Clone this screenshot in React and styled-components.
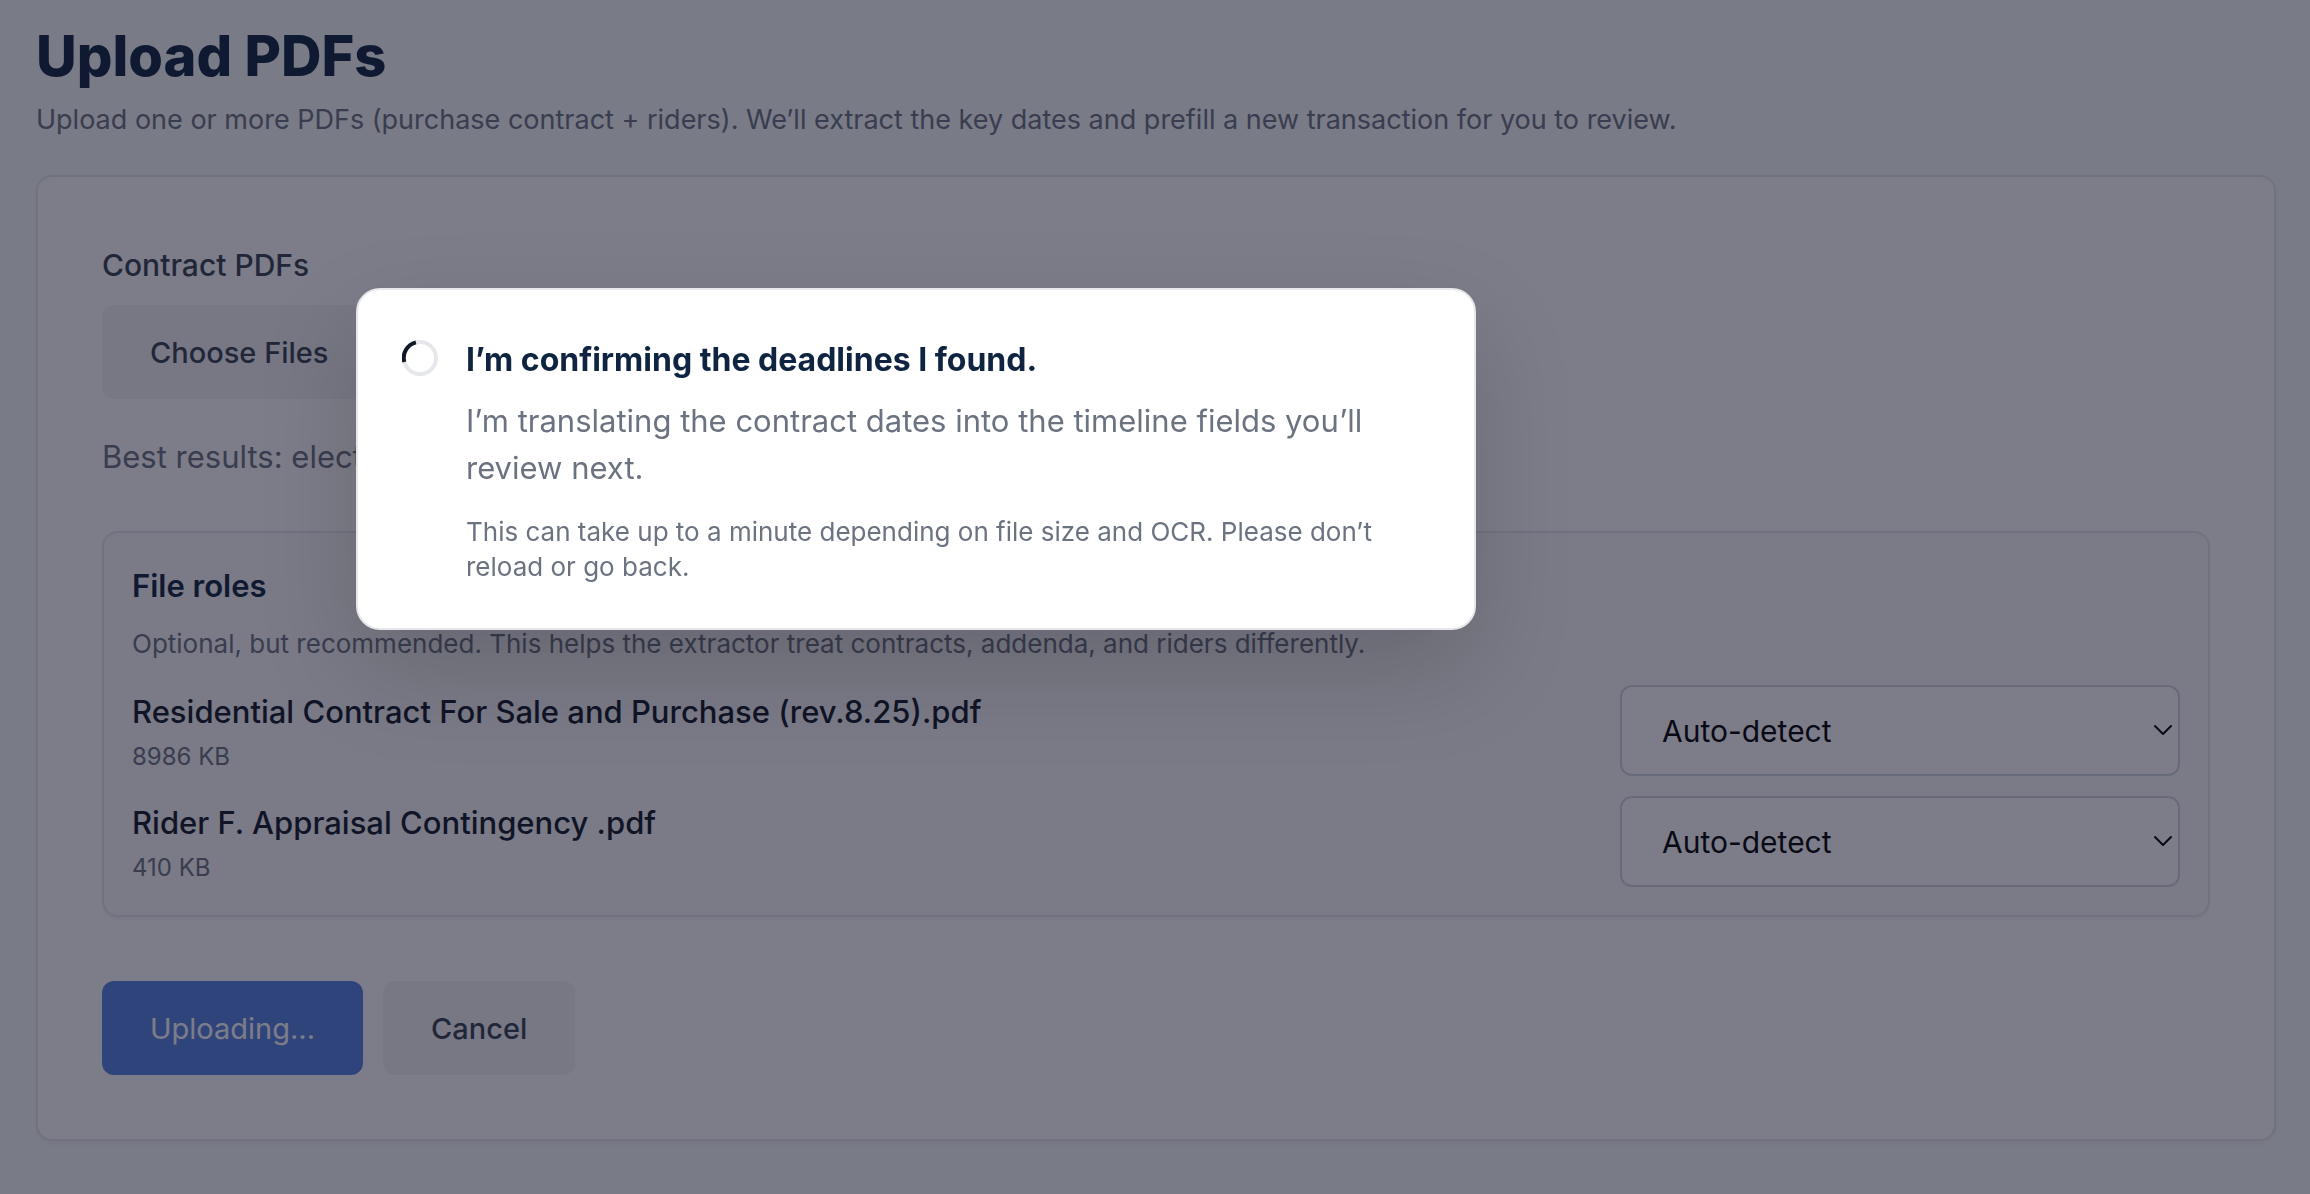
import { useState } from "react";
import styled, { createGlobalStyle } from "styled-components";

const files = [
  { id: "contract", name: "Residential Contract For Sale and Purchase (rev.8.25).pdf", size: "8986 KB" },
  { id: "rider", name: "Rider F. Appraisal Contingency .pdf", size: "410 KB" },
];

function RoleSelect({ label }) {
  const [role, setRole] = useState("auto");

  return (
    <SelectWrap>
      <Select aria-label={label} value={role} onChange={(e) => setRole(e.target.value)}>
        <option value="auto">Auto-detect</option>
        <option value="contract">Contract</option>
        <option value="addendum">Addendum</option>
        <option value="rider">Rider</option>
      </Select>
      <Chevron viewBox="0 0 18 12" aria-hidden="true">
        <path d="M1 2 L9 10 L17 2" />
      </Chevron>
    </SelectWrap>
  );
}

export default function App() {
  return (
    <>
      <GlobalStyle />
      <Page>
        <Title>Upload PDFs</Title>
        <Subtitle>
          Upload one or more PDFs (purchase contract + riders). We’ll extract the key dates and
          prefill a new transaction for you to review.
        </Subtitle>

        <Card>
          <Label htmlFor="pdfs">Contract PDFs</Label>
          <FileInput id="pdfs" type="file" accept="application/pdf" multiple />
          <Hint>Best results: electronic.</Hint>

          <Roles>
            <RolesTitle>File roles</RolesTitle>
            <RolesText>
              Optional, but recommended. This helps the extractor treat contracts, addenda, and
              riders differently.
            </RolesText>
            <FileList>
              {files.map((file) => (
                <FileRow key={file.id}>
                  <div>
                    <FileName>{file.name}</FileName>
                    <FileSize>{file.size}</FileSize>
                  </div>
                  <RoleSelect label={`Role of ${file.name}`} />
                </FileRow>
              ))}
            </FileList>
          </Roles>

          <Actions>
            <Button type="submit" $primary disabled>
              Uploading...
            </Button>
            <Button type="button">Cancel</Button>
          </Actions>
        </Card>
      </Page>

      <Overlay>
        <Modal role="dialog" aria-modal="true" aria-labelledby="progress-title">
          <Spinner viewBox="0 0 36 36" aria-hidden="true">
            <circle cx="18" cy="18" r="16" />
            <path d="M2.3 22.1 A16 16 0 0 1 13.9 2.4" />
          </Spinner>
          <div>
            <ModalTitle id="progress-title">I’m confirming the deadlines I found.</ModalTitle>
            <ModalText>
              I’m translating the contract dates into the timeline fields you’ll review next.
            </ModalText>
            <ModalNote>
              This can take up to a minute depending on file size and OCR. Please don’t reload or
              go back.
            </ModalNote>
          </div>
        </Modal>
      </Overlay>
    </>
  );
}

const GlobalStyle = createGlobalStyle`
  * {
    box-sizing: border-box;
    margin: 0;
    padding: 0;
  }

  body {
    background: #f9fafb;
    color: #111827;
    font-family: Inter, "Liberation Sans", sans-serif;
    font-size: 30px;
  }

  button, input, select {
    font: inherit;
  }
`;

const Page = styled.main`
  padding: 20px 34px 52px 36px;
`;

const Title = styled.h1`
  font-size: 56px;
  font-weight: 800;
  line-height: 72px;
  color: #0f2440;
`;

const Subtitle = styled.p`
  margin-top: 8px;
  font-size: 27px;
  line-height: 40px;
  color: #6b7280;
`;

const Card = styled.form`
  margin-top: 35px;
  padding: 64px;
  background: #fff;
  border: 2px solid #e5e7eb;
  border-radius: 16px;
  box-shadow: 0 2px 4px rgba(0, 0, 0, 0.05);
`;

const Label = styled.label`
  display: block;
  margin-bottom: 16px;
  line-height: 48px;
  font-weight: 500;
  color: #374151;
`;

const FileInput = styled.input`
  display: block;
  width: 100%;
  height: 94px;
  font-size: 29px;
  color: #6b7280;

  &::file-selector-button {
    height: 94px;
    margin-right: 24px;
    padding: 0 48px;
    background: #f3f4f6;
    border: none;
    border-radius: 12px;
    font: inherit;
    font-weight: 500;
    color: #374151;
  }
`;

const Hint = styled.p`
  margin-top: 34px;
  font-size: 31px;
  line-height: 48px;
  color: #6b7280;
`;

const Roles = styled.section`
  margin-top: 50px;
  padding: 28px;
  background: #fafafb;
  border: 2px solid #e5e7eb;
  border-radius: 16px;
  box-shadow: 0 2px 4px rgba(0, 0, 0, 0.05);
`;

const RolesTitle = styled.h2`
  font-size: 31px;
  font-weight: 600;
  line-height: 50px;
  color: #0f2440;
`;

const RolesText = styled.p`
  margin-top: 14px;
  font-size: 26px;
  line-height: 38px;
  color: #6b7280;
`;

const FileList = styled.ul`
  display: grid;
  gap: 20px;
  margin-top: 22px;
  list-style: none;
`;

const FileRow = styled.li`
  display: flex;
  align-items: center;
  justify-content: space-between;
  gap: 24px;
`;

const FileName = styled.p`
  font-size: 31px;
  font-weight: 500;
  line-height: 46px;
`;

const FileSize = styled.p`
  margin-top: 6px;
  font-size: 24px;
  line-height: 32px;
  color: #6b7280;
`;

const SelectWrap = styled.div`
  position: relative;
  flex: 0 0 560px;
`;

const Select = styled.select`
  display: block;
  width: 100%;
  height: 91px;
  padding: 0 40px;
  appearance: none;
  background: #fff;
  border: 2px solid #d1d5db;
  border-radius: 12px;
  color: #000;
`;

const Chevron = styled.svg`
  position: absolute;
  top: 39px;
  right: 8px;
  width: 18px;
  height: 12px;
  fill: none;
  stroke: #000;
  stroke-width: 2;
  stroke-linecap: round;
  stroke-linejoin: round;
  pointer-events: none;
`;

const Actions = styled.div`
  display: flex;
  gap: 20px;
  margin-top: 64px;
`;

const Button = styled.button`
  height: 94px;
  padding: 0 48px;
  border: none;
  border-radius: 12px;
  background: ${({ $primary }) => ($primary ? "#5880e4" : "#f3f4f6")};
  color: ${({ $primary }) => ($primary ? "#fff" : "#374151")};
  font-size: 29px;
  font-weight: ${({ $primary }) => ($primary ? 400 : 500)};
`;

const Overlay = styled.div`
  position: fixed;
  inset: 0;
  padding: 288px 356px;
  background: rgba(16, 18, 38, 0.55);
`;

const Modal = styled.div`
  display: flex;
  align-items: flex-start;
  gap: 28px;
  max-width: 1120px;
  padding: 44px;
  background: #fff;
  border: 2px solid #e5e7eb;
  border-radius: 24px;
  box-shadow: 0 40px 100px rgba(0, 0, 0, 0.16);
`;

const Spinner = styled.svg`
  flex: none;
  width: 36px;
  height: 36px;
  margin-top: 6px;
  fill: none;
  stroke-width: 4;

  circle {
    stroke: #e5e7eb;
  }

  path {
    stroke: #111827;
  }
`;

const ModalTitle = styled.h2`
  font-size: 32px;
  font-weight: 700;
  line-height: 52px;
  color: #0f2440;
`;

const ModalText = styled.p`
  margin-top: 11px;
  font-size: 31px;
  line-height: 47px;
  color: #6b7280;
`;

const ModalNote = styled.p`
  margin-top: 23px;
  font-size: 26px;
  line-height: 35px;
  color: #6b7280;
`;
